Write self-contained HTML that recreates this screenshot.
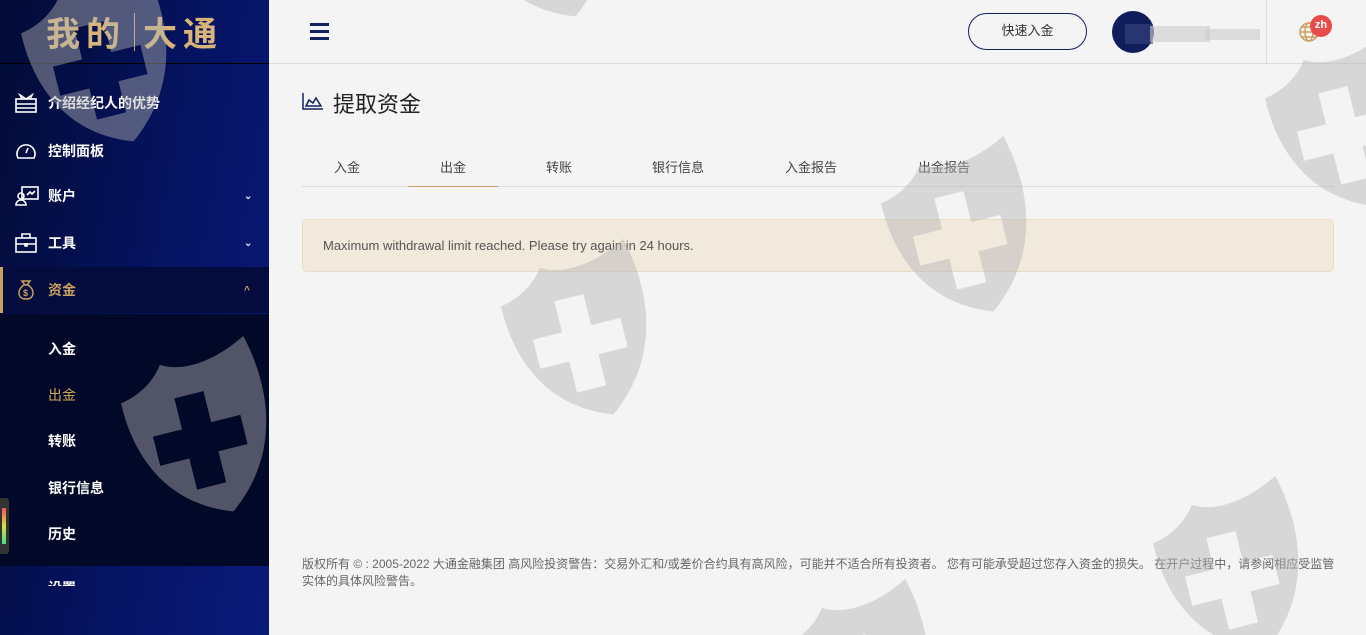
<!DOCTYPE html>
<html><head><meta charset="utf-8">
<style>
*{margin:0;padding:0;box-sizing:border-box}
html,body{width:1366px;height:635px;overflow:hidden}
body{background:#f4f4f4;font-family:"Liberation Sans","Noto Sans CJK SC",sans-serif}
#root{position:relative;width:1366px;height:635px;overflow:hidden}
.side{position:absolute;left:0;top:0;width:269px;height:635px;background:linear-gradient(100deg,#020b35 0%,#061466 60%,#0a1a7a 100%);overflow:hidden}
.logo{height:64px;border-bottom:1px solid #000;display:flex;align-items:center;justify-content:center;font-size:34px;font-weight:bold;color:#d8b478;letter-spacing:6px;font-family:"Noto Sans CJK SC",sans-serif}
.logo i{display:inline-block;width:1px;height:38px;background:#c9a56a;margin:0 8px;vertical-align:middle}
.item{position:absolute;left:0;width:269px;height:46px;display:flex;align-items:center;color:#fff;font-size:14px;font-weight:bold}
.item svg{position:absolute;left:15px}
.item span{position:absolute;left:48px}
.item .ch{position:absolute;left:244px;font-size:10px;color:#ddd}
.sub{position:absolute;left:0;top:314px;width:269px;height:252px;background:#010828}
.sub div{position:absolute;left:48px;font-size:14px;color:#fff;font-weight:bold}
.top{position:absolute;left:269px;top:0;right:0;height:64px;border-bottom:1px solid #ddd}
.btn{position:absolute;left:968px;top:13px;width:119px;height:37px;border:1.5px solid #13205e;border-radius:19px;text-align:center;line-height:34px;font-size:13px;color:#333}
.wmwrap{position:absolute;left:0;top:0;width:1366px;height:635px;overflow:hidden;pointer-events:none;z-index:10}
.wm{position:absolute}
.tabs{position:absolute;left:302px;top:150px;width:1032px;height:37px;border-bottom:1px solid #ddd}
.tabs div{position:absolute;top:0;height:37px;line-height:36px;font-size:13px;color:#444}
.alert{position:absolute;left:302px;top:219px;width:1032px;height:53px;background:#f1e9dc;border:1px solid #eadcc4;border-radius:5px;font-size:13px;color:#555;padding-left:20px;line-height:51px}
.foot{position:absolute;left:302px;top:556px;width:1040px;font-size:12px;color:#666;line-height:17px}
</style></head><body><div id="root">

<div class="side">
<div class="logo">我的<i></i>大通</div>
<div class="item" style="top:80px"><svg width="22" height="20" viewBox="0 0 22 20" fill="none" stroke="#fff" stroke-width="1.6"><rect x="1" y="6" width="20" height="13"/><path d="M1 11h20M1 15h20M7 6l-2-4 6 4 6-4-2 4"/></svg><span>介绍经纪人的优势</span></div>
<div class="item" style="top:128px"><svg width="22" height="20" viewBox="0 0 22 20" fill="none" stroke="#fff" stroke-width="1.6"><path d="M3 17a9 9 0 1 1 16 0z"/><path d="M11 12l2-5"/></svg><span>控制面板</span></div>
<div class="item" style="top:173px"><svg width="24" height="20" viewBox="0 0 24 20" fill="none" stroke="#fff" stroke-width="1.6"><rect x="7" y="1" width="16" height="12"/><circle cx="6" cy="10" r="3"/><path d="M1 19a5 5 0 0 1 10 0z"/><path d="M12 9l3-3 2 2 3-3"/></svg><span>账户</span><b class="ch">⌄</b></div>
<div class="item" style="top:220px"><svg width="22" height="20" viewBox="0 0 22 20" fill="none" stroke="#fff" stroke-width="1.6"><rect x="1" y="5" width="20" height="14"/><path d="M7 5V1h8v4M1 11h20M10 10v3h2v-3"/></svg><span>工具</span><b class="ch">⌄</b></div>
<div class="item" style="top:267px;background:#030c3c;color:#c9a060"><div style="position:absolute;left:0;top:0;width:3px;height:46px;background:#c9a060"></div><svg width="22" height="22" viewBox="0 0 22 22" fill="none" stroke="#c9a060" stroke-width="1.5"><path d="M7 2h8l-3 4h-2zM9 6C2 10 2 20 11 20s9-10 2-14"/><text x="8" y="17" font-size="9" fill="#c9a060" stroke="none">$</text></svg><span>资金</span><b class="ch" style="color:#c9a060">^</b></div>
<div class="sub">
<div style="top:25px">入金</div>
<div style="top:71px;color:#d4a55c;font-weight:normal">出金</div>
<div style="top:117px">转账</div>
<div style="top:164px">银行信息</div>
<div style="top:210px">历史</div>
</div>
<div style="position:absolute;left:0;top:498px;width:9px;height:56px;background:#333;border-radius:0 3px 3px 0"><div style="margin:10px 0 0 2px;width:4px;height:36px;background:linear-gradient(#e55,#dd4,#4d8)"></div></div>
<div style="position:absolute;left:48px;top:578px;color:#fff;font-size:14px;height:8px;overflow:hidden;font-weight:bold">设置</div>
</div>

<div class="top">
<div style="position:absolute;left:41px;top:23px;width:19px"><div style="height:3px;background:#13205e;margin-bottom:4px"></div><div style="height:3px;background:#13205e;margin-bottom:4px"></div><div style="height:3px;background:#13205e"></div></div>
</div>
<div class="btn">快速入金</div>
<div style="position:absolute;left:1112px;top:11px;width:42px;height:42px;border-radius:50%;background:#111c5a"></div>
<div style="position:absolute;left:1125px;top:24px;width:28px;height:20px;background:#3a4680;opacity:.6"></div>
<div style="position:absolute;left:1150px;top:26px;width:60px;height:16px;background:#ccc;opacity:.6"></div>
<div style="position:absolute;left:1205px;top:29px;width:55px;height:11px;background:#ccc;opacity:.6"></div>
<div style="position:absolute;left:1266px;top:0;width:1px;height:64px;background:#ddd"></div>
<svg style="position:absolute;left:1298px;top:21px" width="22" height="22" viewBox="0 0 22 22" fill="none" stroke="#c9a060" stroke-width="1.5"><circle cx="11" cy="11" r="9"/><ellipse cx="11" cy="11" rx="4" ry="9"/><path d="M2 11h18M4 6h14M4 16h14"/></svg>
<div style="position:absolute;left:1310px;top:15px;width:22px;height:22px;border-radius:50%;background:#e94b4b;color:#fff;font-size:11px;font-weight:bold;text-align:center;line-height:21px">zh</div>

<svg style="position:absolute;left:302px;top:92px" width="22" height="18" viewBox="0 0 22 18" fill="none" stroke="#13205e" stroke-width="1.5"><path d="M1 1v16h20"/><path d="M4 14l3-6 4 3 3-5 5 8z"/></svg>
<div style="position:absolute;left:333px;top:87px;font-size:22px;color:#222">提取资金</div>

<div class="tabs">
<div style="left:32px">入金</div>
<div style="left:106px;width:90px;border-bottom:1.5px solid #c9a060;text-align:center">出金</div>
<div style="left:244px">转账</div>
<div style="left:350px">银行信息</div>
<div style="left:483px">入金报告</div>
<div style="left:616px">出金报告</div>
</div>
<div class="alert">Maximum withdrawal limit reached. Please try again in 24 hours.</div>
<div class="foot">版权所有 © : 2005-2022 大通金融集团 高风险投资警告：交易外汇和/或差价合约具有高风险，可能并不适合所有投资者。 您有可能承受超过您存入资金的损失。 在开户过程中，请参阅相应受监管实体的具体风险警告。</div>

<svg width="0" height="0" style="position:absolute"><defs>
<path id="sh" fill-rule="evenodd" d="M5,40 C30,36 45,22 52,12 C75,26 110,20 140,4 C156,70 142,132 88,172 C32,152 4,104 5,40Z M58,48h30v32h30v30h-30v32h-30v-32h-30v-30h30z"/>
</defs></svg>
<div class="wmwrap">
<svg class="wm" style="left:8px;top:-35px" width="180" height="190"><g transform="translate(18 10) rotate(-14 75 90)" fill="#b4b4b4" opacity=".45"><use href="#sh"/></g></svg>
<svg class="wm" style="left:108px;top:335px" width="180" height="190"><g transform="translate(18 10) rotate(-14 75 90)" fill="#b4b4b4" opacity=".45"><use href="#sh"/></g></svg>
<svg class="wm" style="left:450px;top:-160px" width="180" height="190"><g transform="translate(18 10) rotate(-14 75 90)" fill="#b4b4b4" opacity=".45"><use href="#sh"/></g></svg>
<svg class="wm" style="left:488px;top:238px" width="180" height="190"><g transform="translate(18 10) rotate(-14 75 90)" fill="#b4b4b4" opacity=".45"><use href="#sh"/></g></svg>
<svg class="wm" style="left:868px;top:135px" width="180" height="190"><g transform="translate(18 10) rotate(-14 75 90)" fill="#b4b4b4" opacity=".45"><use href="#sh"/></g></svg>
<svg class="wm" style="left:1252px;top:30px" width="180" height="190"><g transform="translate(18 10) rotate(-14 75 90)" fill="#b4b4b4" opacity=".45"><use href="#sh"/></g></svg>
<svg class="wm" style="left:1140px;top:475px" width="180" height="190"><g transform="translate(18 10) rotate(-14 75 90)" fill="#b4b4b4" opacity=".45"><use href="#sh"/></g></svg>
<svg class="wm" style="left:770px;top:578px" width="180" height="190"><g transform="translate(18 10) rotate(-14 75 90)" fill="#b4b4b4" opacity=".45"><use href="#sh"/></g></svg>
</div>
</div></body></html>
